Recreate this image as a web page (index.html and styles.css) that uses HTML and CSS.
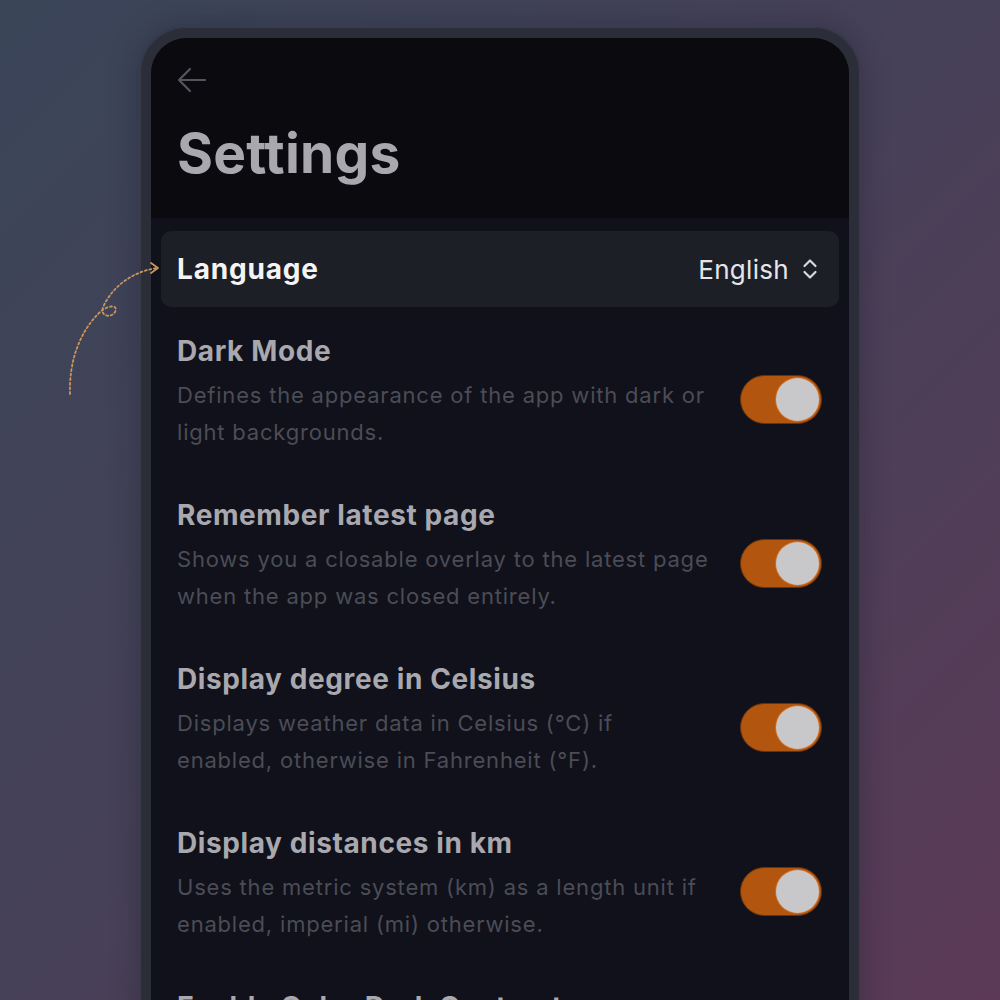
FILE: index.html
```html
<!DOCTYPE html>
<html lang="en">
<head>
  <meta charset="UTF-8">
  <meta name="viewport" content="width=device-width, initial-scale=1.0">
  <title>Settings</title>
  <link rel="stylesheet" href="styles.css">
</head>
<body>
  <svg class="hint" width="200" height="420" viewBox="0 0 200 420">
    <path d="M70 394 C69 360 80 332 99 313 C108 304 119 305 115 312 C111 319 98 316 104 305 C113 287 131 272 157 268" />
    <path d="M151 263 L158 268 L151 273" />
  </svg>

  <div class="phone">
    <div class="screen">
      <header>
        <button class="back" aria-label="Back">
          <svg width="30" height="26" viewBox="0 0 30 26">
            <path d="M28 13 H3 M13 2 L2 13 L13 24" />
          </svg>
        </button>
        <h1>Settings</h1>
      </header>

      <div class="content">
        <div class="select-row">
          <span class="select-label">Language</span>
          <span class="select-value">
            English
            <svg width="18" height="24" viewBox="0 0 18 24">
              <path d="M3.5 9 L9 3.5 L14.5 9 M3.5 15 L9 20.5 L14.5 15" />
            </svg>
          </span>
        </div>

        <div class="option">
          <div class="option-text">
            <h2>Dark Mode</h2>
            <p>Defines the appearance of the app with dark or<br>light backgrounds.</p>
          </div>
          <span class="toggle on"><span class="knob"></span></span>
        </div>

        <div class="option">
          <div class="option-text">
            <h2>Remember latest page</h2>
            <p>Shows you a closable overlay to the latest page<br>when the app was closed entirely.</p>
          </div>
          <span class="toggle on"><span class="knob"></span></span>
        </div>

        <div class="option">
          <div class="option-text">
            <h2>Display degree in Celsius</h2>
            <p>Displays weather data in Celsius (°C) if<br>enabled, otherwise in Fahrenheit (°F).</p>
          </div>
          <span class="toggle on"><span class="knob"></span></span>
        </div>

        <div class="option">
          <div class="option-text">
            <h2>Display distances in km</h2>
            <p>Uses the metric system (km) as a length unit if<br>enabled, imperial (mi) otherwise.</p>
          </div>
          <span class="toggle on"><span class="knob"></span></span>
        </div>

        <div class="option">
          <div class="option-text">
            <h2>Enable Color Dark Contrast</h2>
            <p>Uses a higher contrast for colors in the<br>dark theme of the app.</p>
          </div>
          <span class="toggle on"><span class="knob"></span></span>
        </div>
      </div>
    </div>
  </div>
</body>
</html>
```

FILE: styles.css
```css
:root {
  --header-bg: #0a0a0f;
  --screen-bg: #10111a;
  --card-bg: #1d1f27;
  --title: #a8a8ae;
  --desc: #4b4c56;
  --orange: #b1550f;
  --knob: #c8c8cb;
}

html, body {
  height: 100%;
}

body {
  margin: 0;
  overflow: hidden;
  position: relative;
  font-family: Inter, "Liberation Sans", sans-serif;
  background: linear-gradient(135deg, #3a4558 0%, #474158 50%, #5c3a57 100%);
  display: flex;
  justify-content: center;
}

.hint {
  position: absolute;
  left: 0;
  top: 0;
}

.hint path {
  fill: none;
  stroke: #c9955e;
  stroke-width: 1.8;
  stroke-linecap: round;
  stroke-linejoin: round;
  stroke-dasharray: 2 2.6;
}

.hint path + path {
  stroke-dasharray: none;
}

.phone {
  margin-top: 27px;
  width: 720px;
  height: 1100px;
  box-sizing: border-box;
  padding: 11px 11px 0;
  border-radius: 46px;
  background: #2b2d38;
  box-shadow: inset 0 0 0 1px #3a3c48, 0 0 30px rgba(20, 20, 35, 0.35);
}

.screen {
  height: 100%;
  border-radius: 36px 36px 0 0;
  background: var(--screen-bg);
  overflow: hidden;
}

header {
  height: 180px;
  box-sizing: border-box;
  padding: 29px 26px 0;
  background: var(--header-bg);
}

.back {
  display: block;
  padding: 0;
  border: none;
  background: none;
}

.back path {
  fill: none;
  stroke: #55555d;
  stroke-width: 2.2;
  stroke-linecap: round;
  stroke-linejoin: round;
}

h1 {
  margin: 24px 0 0;
  font-size: 55px;
  line-height: 66px;
  font-weight: 700;
  color: var(--title);
  letter-spacing: 0.2px;
}

.content {
  padding: 13px 10px 0;
}

.select-row {
  display: flex;
  align-items: center;
  justify-content: space-between;
  height: 76px;
  padding: 0 20px 0 16px;
  border-radius: 10px;
  background: var(--card-bg);
}

.select-label {
  font-size: 28px;
  font-weight: 700;
  letter-spacing: 0.8px;
  color: #f4f4f6;
}

.select-value {
  display: flex;
  align-items: center;
  gap: 12px;
  font-size: 26px;
  letter-spacing: 0.3px;
  color: #e6e6e9;
}

.select-value path {
  fill: none;
  stroke: #d8d8dc;
  stroke-width: 2.2;
  stroke-linecap: round;
  stroke-linejoin: round;
}

.option {
  display: flex;
  justify-content: space-between;
  padding: 28px 17px 0 16px;
  margin-bottom: 20px;
}

.option h2 {
  margin: 0;
  font-size: 28px;
  line-height: 32px;
  font-weight: 700;
  letter-spacing: 0.6px;
  color: var(--title);
}

.option p {
  margin: 10px 0 0;
  font-size: 22px;
  line-height: 37px;
  letter-spacing: 0.8px;
  color: var(--desc);
}

.toggle {
  flex: none;
  align-self: center;
  margin-top: 12px;
  width: 82px;
  height: 49px;
  box-sizing: border-box;
  border-radius: 25px;
  border: 1px solid #6b3209;
  background: var(--orange);
  display: flex;
  align-items: center;
  justify-content: flex-end;
  padding: 0 2px;
}

.knob {
  width: 43px;
  height: 43px;
  border-radius: 50%;
  background: var(--knob);
  box-shadow: 0 0 0 1px #d26a1c;
}
```
